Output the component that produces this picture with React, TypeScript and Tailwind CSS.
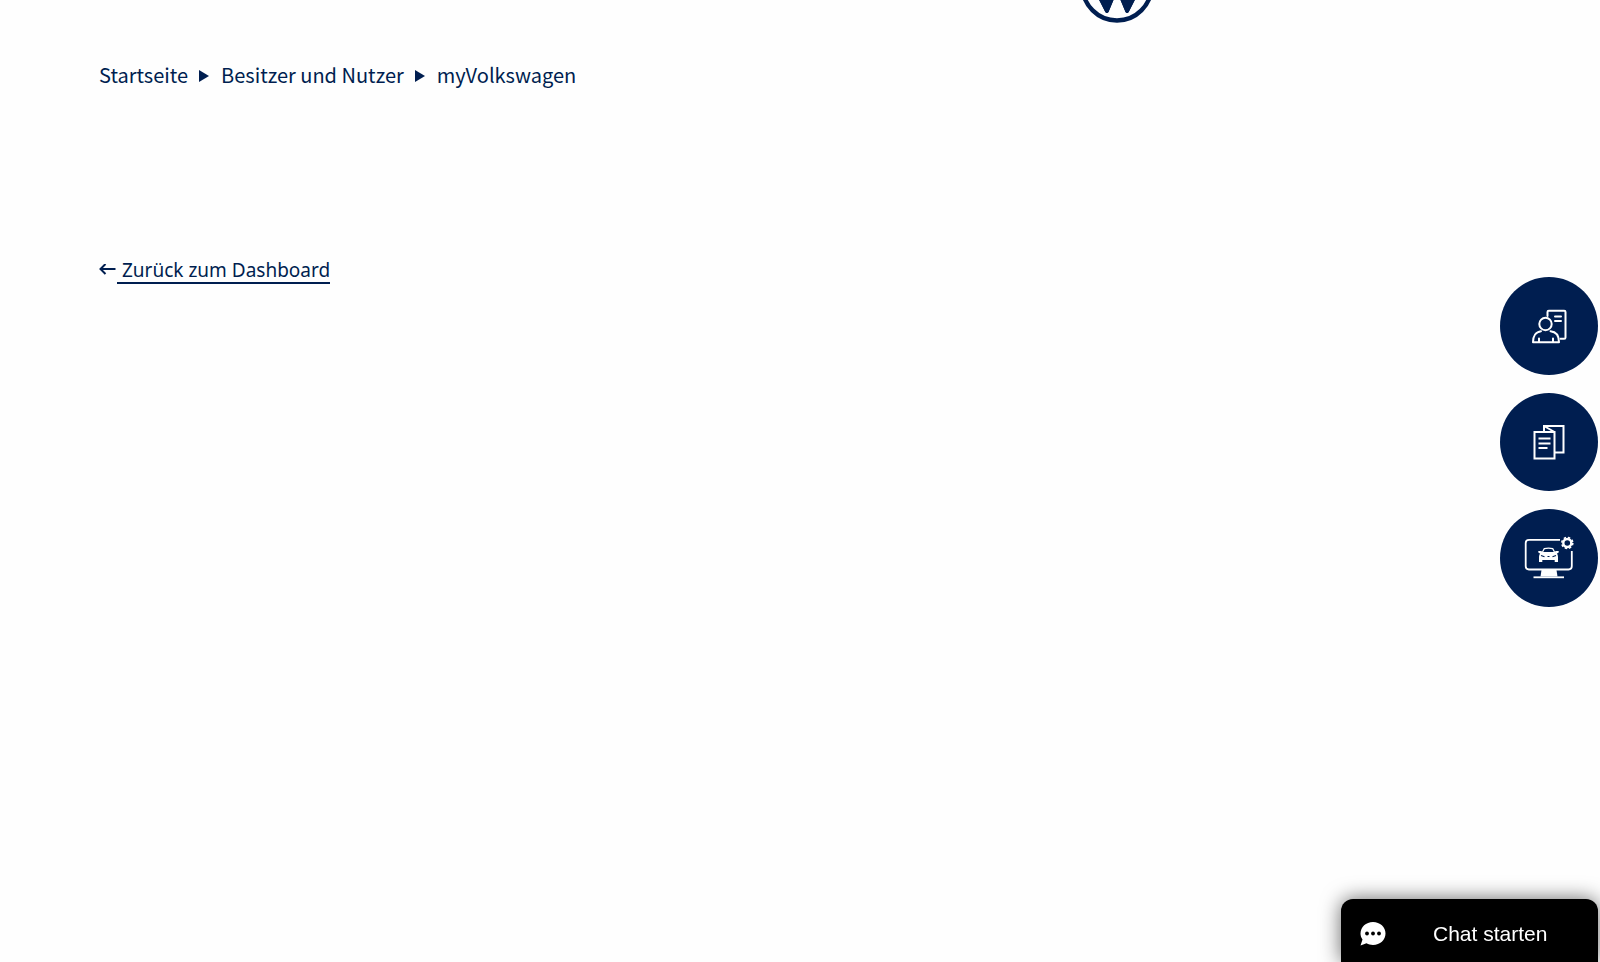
import type { ReactNode } from "react";

const crumbs = ["Startseite", "Besitzer und Nutzer", "myVolkswagen"];

function Logo() {
  return (
    <svg viewBox="0 0 74 74" className="size-[74px]" fill="none" aria-hidden="true">
      <circle cx="37" cy="37" r="34.500" stroke="#001e50" strokeWidth="4.400" />
      <path d="M12 36 25.300 63Q26.900 65 28.500 63L36 45H38L45.500 63Q47.100 65 48.700 63L62 36H52L47 48 41 36H33L27 48 22 36Z" fill="#001e50" />
      <path d="M18 49 25.300 63Q26.900 65 28.500 63L34.300 49ZM39.700 49 45.500 63Q47.100 65 48.700 63L56 49Z" fill="#001e50" />
      <path d="M26 8 37 32 48 8H42L37 20 32 8Z" fill="#001e50" />
    </svg>
  );
}

function AdvisorIcon() {
  return (
    <svg viewBox="4 1 110 110" className="size-[110px] shrink-0" fill="none" stroke="#fff" strokeWidth="2" strokeLinejoin="round" strokeLinecap="round" aria-hidden="true">
      <path d="M57.500 46V42Q57.500 40.700 58.800 40.700H74.200Q75.500 40.700 75.500 42V67.500Q75.500 68.800 74.200 68.800H70.500" />
      <path d="M65 46.500H71M65 51H71" />
      <circle cx="55.500" cy="54" r="6.200" />
      <path d="M51 61.200C46 61.700 43 66 43 72.200H69C69 66 66 61.700 60.500 61.200M49 68.500V72M63 68.500V72" />
    </svg>
  );
}

function BrochureIcon() {
  return (
    <svg viewBox="4 -1 110 110" className="size-[110px] shrink-0" fill="none" stroke="#fff" strokeWidth="2" aria-hidden="true">
      <path d="M44.500 44H64.500V70.500H44.500ZM54 44V38H73.500V64.500H64.500M54 38 64.500 44" />
      <path d="M48.500 50.500H60.500M48.500 55.500H60.500M48.500 60H57.500" />
    </svg>
  );
}

function ConfiguratorIcon() {
  return (
    <svg viewBox="4 -1 110 110" className="size-[110px] shrink-0" fill="none" stroke="#fff" strokeWidth="1.800" aria-hidden="true">
      <path d="M70 35.800H39Q35.700 35.800 35.700 39V62.300Q35.700 65.500 39 65.500H78.500Q81.800 65.500 81.800 62.300V47" />
      <path d="M51.500 66H66.500L67.500 72.500H50.500Z" fill="#fff" stroke="none" />
      <path d="M43.500 73.300H74" />
      <path d="M52.500 48 54.300 44.600Q58.500 43.500 62.700 44.600L64.500 48" strokeWidth="1.200" />
      <path d="M48.300 47H51.200L52.500 48H64.500L65.800 47H68.700V48.500L67 49.500Q68 51 68 53V58H64.700V56H52.300V58H49V53Q49 51 50 49.500L48.300 48.500Z" fill="#fff" stroke="none" />
      <path d="M51 51.500 54.500 52.700M66 51.500 62.500 52.700M57.500 52.500H59.500" stroke="#001e50" strokeWidth="1.200" />
      <circle cx="77.300" cy="39" r="4" strokeWidth="2.400" />
      <circle cx="77.300" cy="39" r="5.500" strokeWidth="1.600" strokeDasharray="2.360 1.960" />
    </svg>
  );
}

function RoundAction({ label, children }: { label: string; children: ReactNode }) {
  return (
    <button type="button" aria-label={label} className="flex size-[98px] items-center justify-center rounded-full bg-[#001e50]">
      {children}
    </button>
  );
}

export default function App() {
  return (
    <div className="min-h-screen bg-[#fefefe] font-['Noto_Sans_CJK_SC','Noto_Sans',sans-serif] text-xl text-[#001e50]">
      <header className="flex h-[23px] items-end overflow-hidden pl-[67.500%]">
        <a href="#" aria-label="Volkswagen">
          <Logo />
        </a>
      </header>
      <main className="px-[99px] pt-9">
        <nav aria-label="Breadcrumb">
          <ol className="flex items-center leading-8">
            {crumbs.map((crumb, i) => (
              <li key={crumb} className="flex items-center">
                {i > 0 && (
                  <svg viewBox="0 0 10 14" className="mr-3 ml-[11px] h-[14px] w-[10px]" fill="currentColor" aria-hidden="true">
                    <path d="M0 2 10 8 0 14Z" />
                  </svg>
                )}
                <a href="#">{crumb}</a>
              </li>
            ))}
          </ol>
        </nav>
        <a href="#" className="mt-[167px] inline-flex items-center leading-6">
          <svg viewBox="0 0 18 14" className="h-[14px] w-[18px]" fill="none" stroke="currentColor" strokeWidth="2" aria-hidden="true">
            <path d="M1.500 5H16.500M6.500 0 1.500 5 6.500 10" />
          </svg>
          <span className="border-b-2 border-[#001e50] pl-[5px] font-['Noto_Sans',sans-serif] text-[19px]">Zurück zum Dashboard</span>
        </a>
      </main>
      <aside className="fixed top-[277px] right-[2px] flex flex-col gap-[18px]">
        <RoundAction label="Beratung"><AdvisorIcon /></RoundAction>
        <RoundAction label="Broschüren"><BrochureIcon /></RoundAction>
        <RoundAction label="Konfigurator"><ConfiguratorIcon /></RoundAction>
      </aside>
      <button type="button" className="fixed right-[2px] bottom-0 flex h-[63px] w-[257px] items-center rounded-t-xl bg-black pt-[6px] pl-[19px] font-['Liberation_Sans',sans-serif] text-[21px] text-white shadow-[0_0_20px_rgba(0,0,0,0.6)]">
        <svg viewBox="0 0 26 24" className="h-6 w-[26px]" aria-hidden="true">
          <path d="M13 0C20 0 25.500 5 25.500 11.500S20 23 13 23C10.500 23 8.500 22.500 6.500 21.300L.5 23.500 2.500 17.500C1.200 15.700.5 13.700.5 11.500.5 5 6 0 13 0Z" fill="#fff" />
          <circle cx="7" cy="11.500" r="1.900" />
          <circle cx="13" cy="11.500" r="1.900" />
          <circle cx="19" cy="11.500" r="1.900" />
        </svg>
        <span className="pl-[47px]">Chat starten</span>
      </button>
    </div>
  );
}
